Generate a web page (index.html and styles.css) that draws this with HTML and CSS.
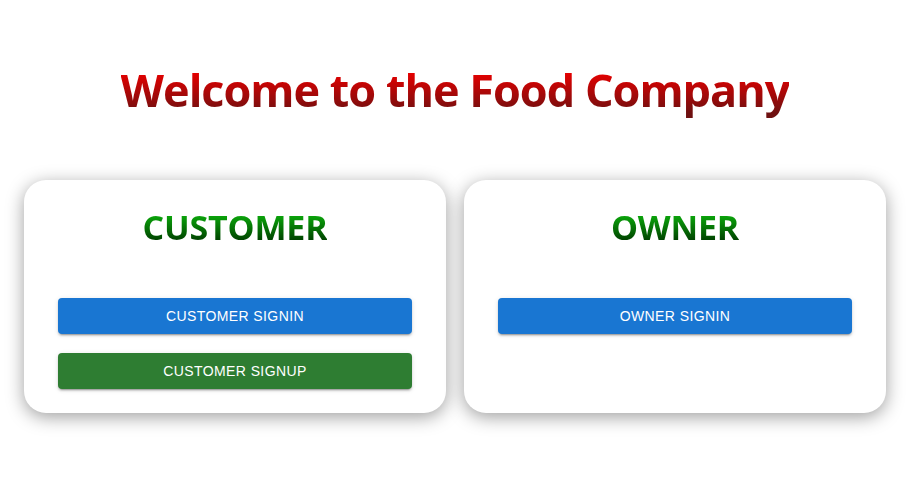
FILE: index.html
```html
<!DOCTYPE html>
<html>
<head>
<meta charset="utf-8">
<link rel="stylesheet" href="styles.css">
</head>
<body>
<div class="page">
  <h1 class="title">Welcome to the Food Company</h1>
  <div class="cards">
    <div class="card">
      <h2 class="card-title">CUSTOMER</h2>
      <div class="actions">
        <button class="btn btn-blue">Customer Signin</button>
        <button class="btn btn-green">Customer Signup</button>
      </div>
    </div>
    <div class="card">
      <h2 class="card-title">OWNER</h2>
      <div class="actions">
        <button class="btn btn-blue">Owner Signin</button>
      </div>
    </div>
  </div>
</div>
</body>
</html>
```
FILE: styles.css
```css
* { box-sizing: border-box; }
html, body { margin: 0; padding: 0; background: #fff; }
body { font-family: "Open Sans", "Noto Sans", sans-serif; }
.page {
  min-height: 490px;
  display: flex;
  flex-direction: column;
  align-items: center;
  padding-top: 60px;
  padding-right: 2px;
}
.title {
  margin: 0;
  font-size: 45px;
  font-weight: 700;
  letter-spacing: -1px;
  line-height: 60px;
  background: linear-gradient(to bottom, #e40000 22%, #6e1010 88%);
  -webkit-background-clip: text;
  background-clip: text;
  color: transparent;
}
.cards {
  display: flex;
  gap: 18px;
  margin-top: 60px;
}
.card {
  width: 422px;
  min-height: 233px;
  background: #fff;
  border-radius: 22px;
  box-shadow: 0 4px 18px rgba(0,0,0,0.38);
  padding: 24px 34px 23px;
  display: flex;
  flex-direction: column;
  align-items: stretch;
}
.card-title {
  margin: 0;
  text-align: center;
  font-size: 34px;
  font-weight: 700;
  letter-spacing: -0.2px;
  line-height: 46px;
  background: linear-gradient(to bottom, #0aa00a 28%, #003d00 82%);
  -webkit-background-clip: text;
  background-clip: text;
  color: transparent;
  align-self: center;
}
.actions {
  margin-top: 48px;
  display: flex;
  flex-direction: column;
  gap: 19px;
}
.btn {
  height: 36px;
  border: none;
  border-radius: 4px;
  color: #fff;
  font-family: "Liberation Sans", Arial, sans-serif;
  font-size: 14px;
  text-transform: uppercase;
  letter-spacing: 0.4px;
  box-shadow: 0 3px 1px -2px rgba(0,0,0,0.2), 0 2px 2px 0 rgba(0,0,0,0.14), 0 1px 5px 0 rgba(0,0,0,0.12);
  cursor: pointer;
}
.btn-blue { background: #1976d2; }
.btn-green { background: #2e7d32; }
```
